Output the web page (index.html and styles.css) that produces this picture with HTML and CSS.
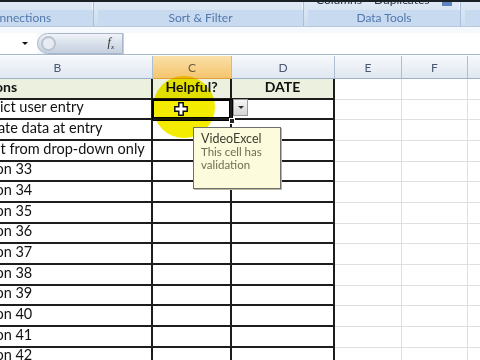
FILE: index.html
```html
<!DOCTYPE html>
<html lang="en">

<head>
    <meta charset="UTF-8">
    <meta name="viewport" content="width=device-width, initial-scale=1.0">
    <title>Data Validation</title>
    <link rel="stylesheet" href="styles.css">
</head>

<body>
    <div class="ribbon">
        <div class="group g1">
            <div class="cmds"></div>
            <div class="label">Connections</div>
        </div>
        <div class="group g2">
            <div class="cmds"></div>
            <div class="label">Sort &amp; Filter</div>
        </div>
        <div class="group g3">
            <div class="cmds"><span>Columns</span><span>Duplicates</span><span class="ico"></span></div>
            <div class="label">Data Tools</div>
        </div>
        <div class="group g4">
            <div class="cmds"></div>
            <div class="label"></div>
        </div>
    </div>

    <div class="formula">
        <div class="namebox"><span class="arrow"></span></div>
        <div class="fxbar">
            <span class="knob"></span>
            <span class="fx">f<sub>x</sub></span>
        </div>
        <div class="input"></div>
    </div>

    <div class="sheet">
        <div class="ch">B</div>
        <div class="ch sel">C</div>
        <div class="ch">D</div>
        <div class="ch">E</div>
        <div class="ch">F</div>
        <div class="ch">G</div>

        <div class="c t hd">Options</div>
        <div class="c t hd mid">Helpful?</div>
        <div class="c t hd mid">DATE</div>
        <div class="c"></div><div class="c"></div><div class="c"></div>

        <div class="c t">Restrict user entry</div>
        <div class="c t active"></div>
        <div class="c t"><span class="dd"></span></div>
        <div class="c"></div><div class="c"></div><div class="c"></div>

        <div class="c t">Validate data at entry</div><div class="c t"></div><div class="c t"></div>
        <div class="c"></div><div class="c"></div><div class="c"></div>

        <div class="c t">Select from drop-down only</div><div class="c t"></div><div class="c t"></div>
        <div class="c"></div><div class="c"></div><div class="c"></div>

        <div class="c t">Option 33</div><div class="c t"></div><div class="c t"></div>
        <div class="c"></div><div class="c"></div><div class="c"></div>

        <div class="c t">Option 34</div><div class="c t"></div><div class="c t"></div>
        <div class="c"></div><div class="c"></div><div class="c"></div>

        <div class="c t">Option 35</div><div class="c t"></div><div class="c t"></div>
        <div class="c"></div><div class="c"></div><div class="c"></div>

        <div class="c t">Option 36</div><div class="c t"></div><div class="c t"></div>
        <div class="c"></div><div class="c"></div><div class="c"></div>

        <div class="c t">Option 37</div><div class="c t"></div><div class="c t"></div>
        <div class="c"></div><div class="c"></div><div class="c"></div>

        <div class="c t">Option 38</div><div class="c t"></div><div class="c t"></div>
        <div class="c"></div><div class="c"></div><div class="c"></div>

        <div class="c t">Option 39</div><div class="c t"></div><div class="c t"></div>
        <div class="c"></div><div class="c"></div><div class="c"></div>

        <div class="c t">Option 40</div><div class="c t"></div><div class="c t"></div>
        <div class="c"></div><div class="c"></div><div class="c"></div>

        <div class="c t">Option 41</div><div class="c t"></div><div class="c t"></div>
        <div class="c"></div><div class="c"></div><div class="c"></div>

        <div class="c t">Option 42</div><div class="c t"></div><div class="c t"></div>
        <div class="c"></div><div class="c"></div><div class="c"></div>

        <!-- overlays: click highlight, cursor, fill handle, input message -->
        <div class="spot"></div>
        <span class="handle"></span>
        <svg class="cursor" width="14" height="14" viewBox="0 0 14 14">
            <path d="M4.8 0.8h4.4v4h4v4.4h-4v4h-4.4v-4h-4v-4.4h4z" fill="#fff" stroke="#111" stroke-width="1.5" />
        </svg>
        <div class="tip">
            <div class="tip-title">VideoExcel</div>
            <div>This cell has validation</div>
        </div>
    </div>
</body>

</html>
```

FILE: styles.css
```css
body {
    margin: 0;
    width: 480px;
    height: 360px;
    overflow: hidden;
    background-color: #ffffff;
    font-family: Lato, "Open Sans", sans-serif;
}

/* ribbon */

.ribbon {
    display: flex;
    height: 24px;
    border-top: 2px solid #1b1f26;
    background: linear-gradient(#dfe9f5, #cddcee);
    border-bottom: 1px solid #b7c9df;
    overflow: hidden;
}

.group {
    display: flex;
    flex-direction: column;
    border-right: 1px solid #a8bedb;
    box-shadow: inset -1px 0 0 #eef4fb;
    margin-right: 4px;
    flex-shrink: 0;
}

.g1 {
    width: 150px;
    margin-left: -57px;
}

.g2 {
    width: 205px;
}

.g3 {
    width: 152px;
}

.g4 {
    width: 40px;
    border-right: none;
}

.cmds {
    height: 8px;
    display: flex;
    gap: 12px;
    padding-left: 8px;
    overflow: hidden;
    font-size: 12px;
    color: #2b3442;
}

.cmds span {
    margin-top: -10px;
}

.cmds .ico {
    width: 10px;
    height: 12px;
    background-color: #5d83bf;
    margin-top: -8px;
}

.label {
    flex: 1;
    text-align: center;
    font-size: 12px;
    line-height: 15px;
    color: #5277ad;
    background-color: #c8daef;
}

/* formula bar */

.formula {
    display: flex;
    align-items: flex-end;
    height: 27px;
    background-color: #f6f9fc;
    border-bottom: 1px solid #a3b7d0;
    margin-bottom: 1px;
}

.namebox {
    width: 37px;
    height: 21px;
    background-color: #ffffff;
    display: flex;
    align-items: center;
    justify-content: flex-end;
    box-sizing: border-box;
}

.arrow {
    width: 0;
    height: 0;
    border-left: 3px solid transparent;
    border-right: 3px solid transparent;
    border-top: 3px solid #111;
    margin-right: 9px;
}

.fxbar {
    width: 86px;
    height: 21px;
    box-sizing: border-box;
    display: flex;
    align-items: center;
    justify-content: space-between;
    padding: 0 8px 0 3px;
    border: 1px solid #a8b7cb;
    border-radius: 11px 0 0 11px;
    background: linear-gradient(#f1f4f8, #d3dce8 60%, #c7d1de);
}

.knob {
    width: 11px;
    height: 11px;
    border-radius: 50%;
    border: 2px solid #b9c3d0;
    background-color: #e7ecf2;
}

.fx {
    font-family: "Liberation Serif", serif;
    font-style: italic;
    font-size: 12px;
    color: #2b2b2b;
}

.fx sub {
    font-size: 7px;
}

.input {
    flex: 1;
    height: 21px;
    background-color: #ffffff;
    border-left: 1px solid #c6cfdb;
}

/* sheet */

.sheet {
    position: relative;
    display: grid;
    grid-template-columns: 190px 79px 103px 67px 66px 80px;
    grid-template-rows: 23px repeat(14, 20.67px);
    margin-left: -37px;
    font-size: 14.5px;
    color: #111111;
}

.ch {
    display: flex;
    align-items: center;
    justify-content: center;
    font-size: 12px;
    color: #4a5870;
    background: linear-gradient(#f7f9fc, #e0e7f1);
    border-right: 1px solid #aebfd4;
    border-bottom: 1px solid #9db1c9;
    box-sizing: border-box;
}

.ch.sel {
    background: linear-gradient(#fae0a8, #f4c56e);
    border-bottom-color: #e2a23c;
    color: #6b5a3a;
}

.c {
    box-sizing: border-box;
    border-right: 1px solid #dcdfe4;
    border-bottom: 1px solid #dcdfe4;
    display: flex;
    align-items: flex-end;
    padding: 0 4px 3px;
    white-space: nowrap;
}

.c.t {
    border-right: 2px solid #1d1d1d;
    border-bottom: 2px solid #1d1d1d;
}

.hd {
    font-size: 14px;
    font-weight: bold;
    background-color: #ecf1df;
}

.mid {
    justify-content: center;
}

.active {
    box-shadow: 0 0 0 1px #000000, inset 0 0 0 1px #000000;
}

.dd {
    width: 15px;
    height: 17px;
    margin: 0 0 -1px -3px;
    box-sizing: border-box;
    border: 1px solid #9b9b9b;
    background: linear-gradient(#f6f6f6, #d6d6d6);
    display: flex;
    align-items: center;
    justify-content: center;
}

.dd::after {
    content: "";
    border-left: 3px solid transparent;
    border-right: 3px solid transparent;
    border-top: 3px solid #333;
}

.spot {
    position: absolute;
    left: 190px;
    top: 20px;
    width: 62px;
    height: 62px;
    border-radius: 50%;
    background-color: #f4ec00;
    mix-blend-mode: multiply;
}

.cursor {
    position: absolute;
    left: 211px;
    top: 46px;
}

.handle {
    position: absolute;
    left: 266px;
    top: 62px;
    width: 4px;
    height: 4px;
    background-color: #222;
    border: 1px solid #fff;
}

.tip {
    position: absolute;
    left: 230px;
    top: 71px;
    width: 88px;
    height: 62px;
    box-sizing: border-box;
    padding: 4px 7px;
    background-color: #fcfcdc;
    border: 1px solid #6e6e6e;
    box-shadow: 1px 1px 0 #b9b9a0;
    font-size: 11.5px;
    line-height: 13px;
    color: #6e6e4e;
    white-space: normal;
}

.tip-title {
    font-size: 12.5px;
    color: #3c3c30;
}
```
